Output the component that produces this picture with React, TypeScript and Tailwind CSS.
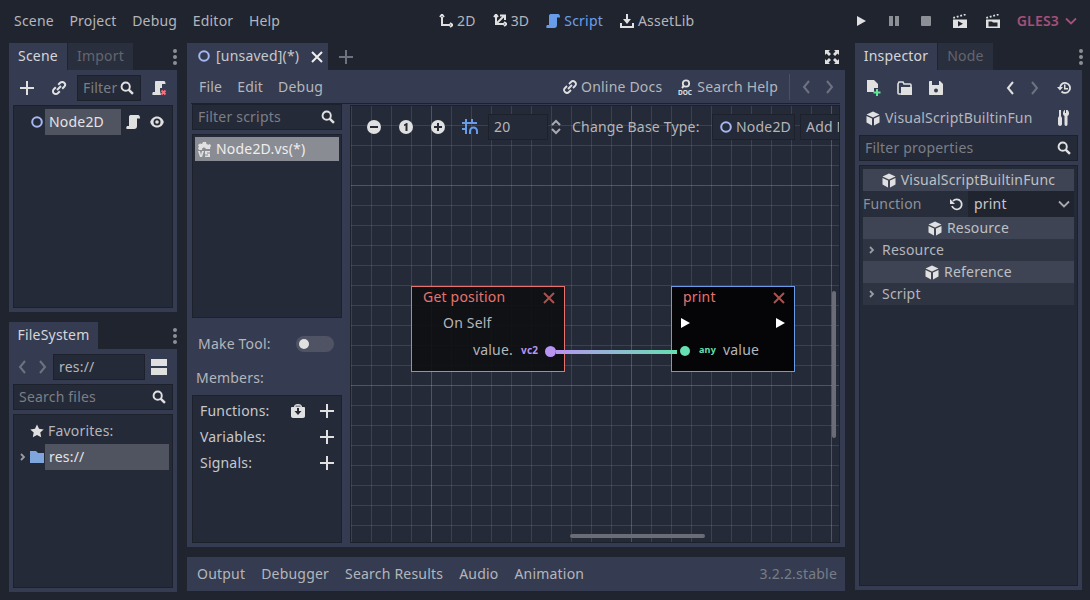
import type { ReactNode } from 'react';

const ink = '#e0e0e0';

function Plus({ className = '' }: { className?: string }) {
  return (
    <svg width="16" height="16" viewBox="0 0 16 16" className={className}>
      <path d="M7 1h2v6h6v2H9v6H7V9H1V7h6z" fill={ink} />
    </svg>
  );
}

function Search({ className = '' }: { className?: string }) {
  return (
    <svg width="14" height="14" viewBox="0 0 16 16" className={className}>
      <circle cx="6.500" cy="6.500" r="4.700" fill="none" stroke={ink} strokeWidth="2.200" />
      <path d="M9.800 9.800l5 5" stroke={ink} strokeWidth="2.800" />
    </svg>
  );
}

function Dots() {
  return (
    <svg width="6" height="16" viewBox="0 0 6 16">
      <circle cx="3" cy="2" r="2" fill="#8d8f96" />
      <circle cx="3" cy="8" r="2" fill="#8d8f96" />
      <circle cx="3" cy="14" r="2" fill="#8d8f96" />
    </svg>
  );
}

function NodeRing({ size = 12 }: { size?: number }) {
  return (
    <svg width={size} height={size} viewBox="0 0 12 12" className="shrink-0">
      <circle cx="6" cy="6" r="4.800" fill="none" stroke="#a5b7f3" strokeWidth="2" />
    </svg>
  );
}

function Cube({ fill = ink }: { fill?: string }) {
  return (
    <svg width="14" height="15" viewBox="0 0 14 15" className="shrink-0">
      <path d="M7 0.500l6.500 3L7 6.500 0.500 3.500z" fill={fill} />
      <path d="M0.500 5l5.500 2.600V14.500L0.500 11.500z" fill={fill} />
      <path d="M13.500 5L8 7.600v6.900l5.500-3z" fill={fill} />
    </svg>
  );
}

function Scroll({ fill = ink, width = 14 }: { fill?: string; width?: number }) {
  return (
    <svg width={width} height={width} viewBox="0 0 14 14" className="shrink-0">
      <path d="M4.500 0H12c1.500 0 2 1.500 2 3.500h-3V11c0 2-1 3-3 3H1c-1 0-1-2 0-3h2V2c0-1 .5-2 1.500-2z" fill={fill} />
    </svg>
  );
}

function Chevron({ dir, color = '#8b8f99' }: { dir: 'left' | 'right'; color?: string }) {
  return (
    <svg width="10" height="14" viewBox="0 0 10 14" className="block">
      <path d={dir === 'left' ? 'M8 1L3 7l5 6' : 'M2 1l5 6-5 6'} fill="none" stroke={color} strokeWidth="2" />
    </svg>
  );
}

function Caret() {
  return (
    <svg width="6" height="8" viewBox="0 0 6 8" className="shrink-0">
      <path d="M1 1l3 3-3 3" fill="none" stroke="#9a9da5" strokeWidth="1.800" />
    </svg>
  );
}

function Clapper({ variant }: { variant: 'play' | 'folder' }) {
  return (
    <svg width="14" height="14" viewBox="0 0 14 14" className="block">
      <path d="M0 3l1.800-.500.500 1.700-1.800.5zM3.500 2l1.800-.500.500 1.700-1.800.5zM7 1l1.800-.500.500 1.700-1.800.5zM10.500 0l1.800-.500.500 1.700-1.800.5z" fill={ink} />
      <path d="M0 5.500h14V14H0z" fill={ink} />
      {variant === 'play' ? <path d="M5 7l5 2.700-5 2.800z" fill="#20242f" /> : <path d="M2.500 7.500h3.500l1 1h4.500v4h-9z" fill="#20242f" />}
    </svg>
  );
}

function Tab({ active, children, w }: { active?: boolean; children: ReactNode; w: string }) {
  return (
    <div
      className={`flex h-[27px] items-center justify-center pb-[2px] ${w} ${
        active ? 'bg-[#353c51] text-[#d5d6d9]' : 'bg-[#2a2f3e] text-[#63666f]'
      }`}
    >
      {children}
    </div>
  );
}

function TopLink({ icon, label, color = 'text-[#b4b6bb]' }: { icon: ReactNode; label: string; color?: string }) {
  return (
    <div className={`flex items-center gap-[4px] ${color}`}>
      {icon}
      <span>{label}</span>
    </div>
  );
}

function Input({ className, text, muted = true }: { className: string; text: string; muted?: boolean }) {
  return (
    <div className={`flex h-[26px] items-center justify-between overflow-hidden border border-[#1d212b] bg-[#252a38] pl-[5px] pr-[6px] ${className}`}>
      <span className={muted ? 'text-[#7b7e86]' : 'text-[#b4b6bb]'}>{text}</span>
      <Search className="shrink-0" />
    </div>
  );
}

function SectionHead({ label }: { label: string }) {
  return (
    <div className="flex h-[22px] items-center justify-center gap-[5px] bg-[#3e4453] text-[#bfc0c4]">
      <Cube />
      <span>{label}</span>
    </div>
  );
}

function SectionRow({ label }: { label: string }) {
  return (
    <div className="flex h-[22px] items-center gap-[7px] bg-[#2e3442] pl-[6px] text-[#b4b6bb]">
      <Caret />
      <span>{label}</span>
    </div>
  );
}

function ScenePanel() {
  return (
    <div className="flex h-[269px] flex-col">
      <div className="flex items-center">
        <Tab active w="w-[58px]">Scene</Tab>
        <div className="w-px" />
        <Tab w="w-[65px]">Import</Tab>
        <div className="ml-auto mr-[-1px] flex">
          <Dots />
        </div>
      </div>
      <div className="flex min-h-0 flex-1 flex-col bg-[#353c51] px-[4px] pb-[4px] pt-[5px]">
        <div className="flex h-[26px] items-center">
          <Plus className="ml-[6px] shrink-0" />
          <svg width="16" height="16" viewBox="0 0 16 16" className="ml-[16px] shrink-0">
            <path d="M6 10l4-4M4.800 7.200L2.800 9.200a2.800 2.800 0 0 0 4 4l2-2M11.200 8.800l2-2a2.800 2.800 0 0 0-4-4l-2 2" fill="none" stroke={ink} strokeWidth="2" />
          </svg>
          <Input className="ml-[10px] w-[64px] shrink-0" text="Filter" />
          <svg width="16" height="16" viewBox="0 0 16 16" className="ml-[10px] shrink-0">
            <path d="M5 1h8c1 0 1.500 1 1.500 3H11v4H9v3l1 4H2c-1 0-1-2 0-3h2V2c0-.5.500-1 1-1z" fill={ink} />
            <path d="M10.500 10.500l4 4M14.500 10.500l-4 4" stroke="#ff6f7d" strokeWidth="1.800" />
          </svg>
        </div>
        <div className="mt-[4px] min-h-0 flex-1 border border-[#1d212b] bg-[#252a38] pl-[17px] pt-[3px]">
          <div className="flex h-[26px] items-center">
            <NodeRing />
            <div className="ml-[2px] flex h-[26px] w-[76px] items-center bg-[#505360] pl-[4px] text-[#e4e4e6]">Node2D</div>
            <div className="ml-[5px]"><Scroll /></div>
            <svg width="14" height="12" viewBox="0 0 14 12" className="ml-[10px]">
              <path d="M7 0.500c3.500 0 6 2.500 6.800 5.500-.8 3-3.300 5.500-6.800 5.500S1 9 .2 6C1 3 3.500.5 7 .5z" fill={ink} />
              <circle cx="7" cy="6" r="3.500" fill="#252a38" />
              <circle cx="7" cy="6" r="1.800" fill={ink} />
            </svg>
          </div>
        </div>
      </div>
    </div>
  );
}

function FileSystemPanel() {
  return (
    <div className="mt-[10px] flex h-[270px] flex-col">
      <div className="flex items-center">
        <Tab active w="w-[89px]">FileSystem</Tab>
        <div className="ml-auto mr-[-1px] flex">
          <Dots />
        </div>
      </div>
      <div className="flex min-h-0 flex-1 flex-col bg-[#353c51] px-[4px] pb-[4px] pt-[5px]">
        <div className="flex h-[26px] items-center">
          <div className="ml-[4px]"><Chevron dir="left" color="#6e7280" /></div>
          <div className="ml-[11px]"><Chevron dir="right" color="#6e7280" /></div>
          <div className="ml-[5px] flex h-[26px] w-[92px] items-center border border-[#1d212b] bg-[#252a38] pl-[5px] text-[#b4b6bb]">res://</div>
          <div className="ml-[6px] flex w-[16px] flex-col gap-[2px]">
            <div className="h-[7px] bg-[#e0e0e0]" />
            <div className="h-[7px] bg-[#e0e0e0]" />
          </div>
        </div>
        <Input className="mt-[4px]" text="Search files" />
        <div className="mt-[4px] min-h-0 flex-1 border border-[#1d212b] bg-[#252a38] pt-[3px]">
          <div className="flex h-[26px] items-center pl-[16px] text-[#b4b6bb]">
            <svg width="14" height="14" viewBox="0 0 14 14">
              <path d="M7 .5l2 4.300 4.700.6-3.400 3.200.9 4.700L7 11l-4.200 2.300.9-4.700L.3 5.400 5 4.800z" fill={ink} />
            </svg>
            <span className="ml-[4px]">Favorites:</span>
          </div>
          <div className="flex h-[26px] items-center">
            <div className="ml-[6px]"><Caret /></div>
            <svg width="14" height="12" viewBox="0 0 14 12" className="ml-[4px] shrink-0">
              <path d="M0 0h6l2 2h6v10H0z" fill="#7fa6dc" />
            </svg>
            <div className="ml-px flex h-[26px] w-[124px] items-center bg-[#505360] pl-[4px] text-[#e4e4e6]">res://</div>
          </div>
        </div>
      </div>
    </div>
  );
}

function MemberRow({ label, extra }: { label: string; extra?: boolean }) {
  return (
    <div className="flex h-[26px] items-center pl-[7px] pr-[6px] text-[#c7c8cb]">
      <span className="flex-1">{label}</span>
      {extra && (
        <svg width="14" height="14" viewBox="0 0 14 14" className="mr-[14px]">
          <path d="M3 3c0-2 1.500-3 4-3s4 1 4 3h2c.6 0 1 .5 1 1v8c0 1-.8 2-2 2H2c-1 0-2-1-2-2V4c0-.5.4-1 1-1z" fill={ink} />
          <path d="M6 4h2v3h2.500L7 11 3.500 7H6zM4.500 2.500h5v-.8h-5z" fill="#252a38" />
        </svg>
      )}
      <Plus />
    </div>
  );
}

function GraphNode({
  className,
  border,
  title,
  bg,
  children,
}: {
  className: string;
  border: string;
  title: string;
  bg: string;
  children: ReactNode;
}) {
  return (
    <div className={`absolute h-[86px] border ${border} ${bg} ${className}`}>
      <div className="flex h-[20px] items-center justify-between pl-[11px] pr-[9px] text-[#e8736d]">
        <span>{title}</span>
        <svg width="12" height="12" viewBox="0 0 12 12" className="mt-[2px]">
          <path d="M1 1l10 10M11 1L1 11" stroke="#a9534f" strokeWidth="2" />
        </svg>
      </div>
      {children}
    </div>
  );
}

function ExecArrow() {
  return (
    <svg width="9" height="10" viewBox="0 0 9 10">
      <path d="M0 0l9 5-9 5z" fill="#ffffff" />
    </svg>
  );
}

function Canvas() {
  return (
    <div className="relative min-w-0 flex-1 overflow-hidden border border-[#1d212b] bg-[#252a38] bg-[linear-gradient(to_right,rgba(255,255,255,0.1)_1px,transparent_1px),linear-gradient(to_bottom,rgba(255,255,255,0.1)_1px,transparent_1px),linear-gradient(to_right,rgba(255,255,255,0.11)_1px,transparent_1px),linear-gradient(to_bottom,rgba(255,255,255,0.11)_1px,transparent_1px)] [background-position:80px_0,0_79px,0_0,0_-1px] [background-size:200px_200px,200px_200px,20px_20px,20px_20px]">
      {/* graph toolbar */}
      <div className="absolute left-[16px] top-[8px] flex h-[26px] items-center">
        <svg width="14" height="14" viewBox="0 0 14 14" className="shrink-0">
          <circle cx="7" cy="7" r="7" fill={ink} />
          <path d="M3 6h8v2H3z" fill="#252a38" />
        </svg>
        <svg width="14" height="14" viewBox="0 0 14 14" className="ml-[18px] shrink-0">
          <circle cx="7" cy="7" r="7" fill={ink} />
          <path d="M5 4.500L7.500 3H8.500v8h-2V5.500L5 6z" fill="#252a38" />
        </svg>
        <svg width="14" height="14" viewBox="0 0 14 14" className="ml-[18px] shrink-0">
          <circle cx="7" cy="7" r="7" fill={ink} />
          <path d="M6 3h2v3h3v2H8v3H6V8H3V6h3z" fill="#252a38" />
        </svg>
        <svg width="16" height="16" viewBox="0 0 16 16" className="ml-[17px] shrink-0">
          <path d="M4 0v15M10 0v5M0 4h15M0 10h5" stroke="#699ce8" strokeWidth="2" fill="none" />
          <path d="M8 15v-3a3.500 3.500 0 0 1 7 0v3" stroke="#699ce8" strokeWidth="2" fill="none" />
        </svg>
        <div className="ml-[10px] flex h-[26px] w-[60px] shrink-0 items-center border border-[#1d212b] bg-[#252a38] pl-[5px] text-[#b4b6bb]">20</div>
        <svg width="12" height="16" viewBox="0 0 12 16" className="ml-[2px] shrink-0">
          <path d="M2 6l4-4 4 4M2 10l4 4 4-4" fill="none" stroke="#a8aab0" strokeWidth="2" />
        </svg>
        <span className="ml-[10px] w-[128px] shrink-0 whitespace-nowrap text-[#b4b6bb]">Change Base Type:</span>
        <div className="ml-[12px] flex h-[26px] w-[83px] shrink-0 items-center gap-[4px] border border-[#1d212b] bg-[#252a38] pl-[7px] text-[#b4b6bb]">
          <NodeRing />
          <span>Node2D</span>
        </div>
        <div className="ml-[5px] flex h-[26px] w-[80px] shrink-0 items-center whitespace-nowrap border border-[#1d212b] bg-[#252a38] pl-[5px] text-[#b4b6bb]">Add Node</div>
      </div>

      <GraphNode className="left-[60px] top-[180px] w-[154px]" border="border-[#e8736d]" title="Get position" bg="bg-[#0d0e12]/90">
        <div className="flex h-[31px] items-center pl-[31px] text-[#b4b6bb]">On Self</div>
        <div className="flex h-[24px] items-center justify-end pr-[51px] text-[#b4b6bb]">
          <span>value.</span>
        </div>
        <span className="absolute left-[109px] top-[56px] text-[10px] font-bold leading-[14px] text-[#b795f0]">vc2</span>
        <div className="absolute right-[8px] top-[59px] h-[11px] w-[11px] rounded-full bg-[#b795f0]" />
      </GraphNode>

      <GraphNode className="left-[320px] top-[180px] w-[124px]" border="border-[#699ce8]" title="print" bg="bg-[#050508]">
        <div className="flex h-[31px] items-center justify-between px-[9px]">
          <ExecArrow />
          <ExecArrow />
        </div>
        <div className="flex h-[24px] items-center text-[#b4b6bb]">
          <div className="ml-[8px] mt-[2px] h-[10px] w-[10px] rounded-full bg-[#66e0b0]" />
          <span className="ml-[9px] w-[19px] text-[9px] font-bold text-[#66e0b0]">any</span>
          <span className="ml-[5px]">value</span>
        </div>
      </GraphNode>

      {/* wire */}
      <div className="absolute left-[205px] top-[244px] h-[4px] w-[121px] bg-[linear-gradient(to_right,#b795f0,#66e0b0)]" />

      {/* scrollbars */}
      <div className="absolute left-[219px] top-[428px] h-[4px] w-[135px] rounded-full bg-[#6a6d77]" />
      <div className="absolute left-[481px] top-[185px] h-[147px] w-[4px] rounded-full bg-[#6a6d77]" />
    </div>
  );
}

function CenterPanel() {
  return (
    <div className="flex w-[658px] flex-col">
      <div className="flex items-center">
        <div className="flex h-[27px] w-[141px] items-center bg-[#353c51] pb-[2px] pl-[11px] text-[#c7c8cb]">
          <NodeRing />
          <span className="ml-[6px]">[unsaved](*)</span>
          <svg width="12" height="12" viewBox="0 0 12 12" className="ml-[12px] mt-[2px]">
            <path d="M1 1l10 10M11 1L1 11" stroke="#eeeeee" strokeWidth="2" />
          </svg>
        </div>
        <svg width="14" height="14" viewBox="0 0 14 14" className="ml-[11px]">
          <path d="M6 0h2v6h6v2H8v6H6V8H0V6h6z" fill="#6e7280" />
        </svg>
        <svg width="14" height="14" viewBox="0 0 14 14" className="ml-auto mr-[6px]">
          <path d="M0 0h5L3.500 1.500 6 4 4 6 1.500 3.500 0 5zM14 0v5l-1.500-1.500L10 6 8 4l2.500-2.500L9 0zM0 14V9l1.500 1.500L4 8l2 2-2.500 2.500L5 14zM14 14H9l1.500-1.500L8 10l2-2 2.500 2.500L14 9z" fill={ink} />
        </svg>
      </div>
      <div className="flex h-[477px] flex-col bg-[#353c51] pb-[4px] pl-[4px] pr-[5px]">
        <div className="flex h-[34px] shrink-0 items-center border-b border-[#1d212b] pl-[8px] pr-[5px] text-[#b4b6bb]">
          <span>File</span>
          <span className="ml-[15px]">Edit</span>
          <span className="ml-[15px]">Debug</span>
          <div className="ml-auto flex items-center gap-[15px]">
            <TopLink
              label="Online Docs"
              icon={
                <svg width="14" height="14" viewBox="0 0 14 14">
                  <path d="M5 9l4-4M4 6L2 8a2.700 2.700 0 0 0 4 4l2-2M10 8l2-2a2.700 2.700 0 0 0-4-4L6 4" fill="none" stroke={ink} strokeWidth="1.800" />
                </svg>
              }
            />
            <TopLink
              label="Search Help"
              icon={
                <svg width="16" height="16" viewBox="0 0 16 16">
                  <circle cx="9" cy="4.500" r="3.200" fill="none" stroke={ink} strokeWidth="1.800" />
                  <path d="M6.800 6.800L5 9" stroke={ink} strokeWidth="2" />
                  <text x="8" y="15.500" textAnchor="middle" fontSize="6.500" fontWeight="700" fill={ink} letterSpacing="0">DOC</text>
                </svg>
              }
            />
          </div>
          <div className="ml-[11px] h-[26px] w-px bg-[#4b5164]" />
          <div className="ml-[11px]"><Chevron dir="left" color="#6e7280" /></div>
          <div className="ml-[14px]"><Chevron dir="right" color="#6e7280" /></div>
        </div>
        <div className="flex min-h-0 flex-1 pt-[1px]">
          <div className="-mt-px flex w-[151px] shrink-0 flex-col pl-px">
            <Input className="!h-[26px]" text="Filter scripts" />
            <div className="mt-[4px] h-[184px] shrink-0 border border-[#1d212b] bg-[#252a38] px-[2px] pt-[2px]">
              <div className="flex h-[24px] items-center gap-[4px] bg-[#8a8c93] pl-[2px] text-[#eeeeee]">
                <svg width="15" height="15" viewBox="0 0 15 15" className="shrink-0">
                  <path d="M6 0h3l.5 2 1.800.8L13 2l1 2-1 1.500.3 1.500H9a2 2 0 0 0-4 1H2l-1-2 1-1-1-2 2-1.500L5 2z" fill={ink} />
                  <path d="M1 9h2l1 4 1-4h2l-2 6H3zM8 9h5v1.500h-3v1h3V15H8v-1.500h3v-1H8z" fill={ink} />
                </svg>
                <span>Node2D.vs(*)</span>
              </div>
            </div>
            <div className="mt-[13px] flex h-[26px] items-center justify-between pl-[6px] pr-[8px] text-[#b4b6bb]">
              <span>Make Tool:</span>
              <div className="flex h-[16px] w-[38px] items-center rounded-full bg-[#4f5364] pl-[3px]">
                <div className="h-[10px] w-[10px] rounded-full bg-[#e0e0e0]" />
              </div>
            </div>
            <div className="mt-[8px] flex h-[26px] items-center pl-[4px] text-[#b4b6bb]">Members:</div>
            <div className="mt-[4px] min-h-0 flex-1 border border-[#1d212b] bg-[#252a38] pt-[2px]">
              <MemberRow label="Functions:" extra />
              <MemberRow label="Variables:" />
              <MemberRow label="Signals:" />
            </div>
          </div>
          <div className="ml-[8px] flex min-w-0 flex-1">
            <Canvas />
          </div>
        </div>
      </div>
      <div className="mt-[10px] flex h-[34px] items-center bg-[#353c51] pl-[10px] pr-[8px] text-[#b4b6bb]">
        <span>Output</span>
        <span className="ml-[16px]">Debugger</span>
        <span className="ml-[16px]">Search Results</span>
        <span className="ml-[16px]">Audio</span>
        <span className="ml-[16px]">Animation</span>
        <span className="ml-auto text-[#797c86]">3.2.2.stable</span>
      </div>
    </div>
  );
}

function InspectorPanel() {
  return (
    <div className="flex w-[227px] flex-col">
      <div className="flex items-center">
        <Tab active w="w-[82px]">Inspector</Tab>
        <div className="w-px" />
        <Tab w="w-[55px]">Node</Tab>
        <div className="ml-auto mr-[-2px] flex">
          <Dots />
        </div>
      </div>
      <div className="flex h-[520px] flex-col bg-[#353c51] px-[4px] pb-[4px]">
        <div className="flex h-[35px] shrink-0 items-center pl-[7px] pr-[7px]">
          <svg width="15" height="16" viewBox="0 0 15 16">
            <path d="M1 0h7l4 4v4H8v4H1z" fill={ink} />
            <path d="M10 9h2v2.500h2.500v2H12V16h-2v-2.500H7.500v-2H10z" fill="#5fe89c" />
          </svg>
          <svg width="15" height="14" viewBox="0 0 15 14" className="ml-[16px]">
            <path d="M1 3l1-2h4l1 2h6c.6 0 1 .4 1 1v9H2c-.6 0-1-.4-1-1z" fill="none" stroke={ink} strokeWidth="1.600" />
            <path d="M4 6h11v8H4z" fill={ink} />
          </svg>
          <svg width="14" height="14" viewBox="0 0 14 14" className="ml-[17px]">
            <path d="M0 1c0-.6.4-1 1-1h10l3 3v10c0 .6-.4 1-1 1H1c-.6 0-1-.4-1-1z" fill={ink} />
            <path d="M3 0h7v4H3z" fill="#353c51" />
            <circle cx="7" cy="9.500" r="2" fill="#353c51" />
          </svg>
          <div className="ml-auto"><Chevron dir="left" color="#e0e0e0" /></div>
          <div className="ml-[15px]"><Chevron dir="right" color="#6e7280" /></div>
          <svg width="14" height="14" viewBox="0 0 14 14" className="ml-[17px]">
            <path d="M3 7a5 5 0 1 1 1.500 3.500" fill="none" stroke={ink} strokeWidth="1.800" />
            <path d="M0 6h6L3 9.500zM7 3.500h1.500V7H11v1.500H7z" fill={ink} />
          </svg>
        </div>
        <div className="flex h-[26px] shrink-0 items-center pl-[7px] pr-[8px] text-[#b4b6bb]">
          <Cube />
          <span className="ml-[5px] flex-1 whitespace-nowrap">VisualScriptBuiltinFun</span>
          <svg width="14" height="16" viewBox="0 0 14 16">
            <path d="M3 0h2v6l1 2v6c0 1-1 2-2 2s-2-1-2-2V8l1-2zM9 0v3h1V0h1.500c1 1 1.500 2 1.500 3.500 0 1-.5 2-1.500 2.500v8c0 1-.5 2-1.500 2s-1.500-1-1.500-2V6C7.500 5.500 7 4.500 7 3.500 7 2 7.500 1 8.500 0z" fill={ink} />
          </svg>
        </div>
        <Input className="mt-[4px] shrink-0" text="Filter properties" />
        <div className="mt-[4px] min-h-0 flex-1 border border-[#1d212b] bg-[#252a38] px-[3px] pt-[3px]">
          <SectionHead label="VisualScriptBuiltinFunc" />
          <div className="flex h-[26px] items-center bg-[#272d3b] text-[#8f9198]">
            <span className="w-[87px]">Function</span>
            <svg width="14" height="14" viewBox="0 0 14 14" className="mr-[4px] shrink-0">
              <path d="M3 4a5 5 0 1 1-1 5" fill="none" stroke={ink} strokeWidth="1.800" />
              <path d="M0 2v5h5z" fill={ink} />
            </svg>
            <div className="flex h-[26px] flex-1 items-center justify-between bg-[#20242f] pl-[6px] pr-[4px] text-[#c7c8cb]">
              <span>print</span>
              <svg width="12" height="8" viewBox="0 0 12 8">
                <path d="M1 1.500l5 5 5-5" fill="none" stroke="#a8aab0" strokeWidth="1.800" />
              </svg>
            </div>
          </div>
          <SectionHead label="Resource" />
          <SectionRow label="Resource" />
          <SectionHead label="Reference" />
          <SectionRow label="Script" />
        </div>
      </div>
    </div>
  );
}

export default function App() {
  return (
    <div className="h-[600px] w-[1090px] overflow-hidden bg-[#20242f] font-['Noto_Sans',sans-serif] text-[14px] leading-[20px] tracking-[0.2px]">
      {/* top bar */}
      <div className="relative flex h-[43px] items-center pb-[2px] pl-[14px] pr-[13px] text-[#b4b6bb]">
        <div className="flex gap-[15.6px]">
          <span>Scene</span>
          <span>Project</span>
          <span>Debug</span>
          <span>Editor</span>
          <span>Help</span>
        </div>
        <div className="absolute left-[439px] top-[11px] flex gap-[17px]">
          <TopLink
            label="2D"
            icon={
              <svg width="14" height="14" viewBox="0 0 14 14">
                <path d="M3 3v8h8M1 3l2-2.500L5 3M11 9l2.500 2-2.500 2" fill="none" stroke={ink} strokeWidth="2" />
              </svg>
            }
          />
          <TopLink
            label="3D"
            icon={
              <svg width="14" height="14" viewBox="0 0 14 14">
                <path d="M3 2v8h8M3 10l8-8M1 3l2-2.500L5 3M11 8l2.500 2-2.500 2M7 1.500h5V6" fill="none" stroke={ink} strokeWidth="2" />
              </svg>
            }
          />
          <TopLink label="Script" color="text-[#6d9fe8]" icon={<Scroll fill="#699ce8" />} />
          <TopLink
            label="AssetLib"
            icon={
              <svg width="14" height="14" viewBox="0 0 14 14">
                <path d="M6 0h2v5h3L7 10 3 5h3zM0 9h2v3h10V9h2v5H0z" fill={ink} />
              </svg>
            }
          />
        </div>
        <div className="ml-auto flex items-center">
          <svg width="12" height="12" viewBox="0 0 12 12">
            <path d="M1 1l9 5-9 5z" fill={ink} />
          </svg>
          <svg width="12" height="12" viewBox="0 0 12 12" className="ml-[20px]">
            <path d="M1 1h4v10H1zM7 1h4v10H7z" fill="#8d8f96" />
          </svg>
          <svg width="12" height="12" viewBox="0 0 12 12" className="ml-[20px]">
            <rect x="1" y="1" width="10" height="10" rx="1" fill="#8d8f96" />
          </svg>
          <div className="ml-[21px]"><Clapper variant="play" /></div>
          <div className="ml-[19px]"><Clapper variant="folder" /></div>
          <span className="ml-[17px] font-semibold text-[#a55078]">GLES3</span>
          <svg width="12" height="8" viewBox="0 0 12 8" className="ml-[6px]">
            <path d="M1 1.500l5 5 5-5" fill="none" stroke="#a55078" strokeWidth="1.800" />
          </svg>
        </div>
      </div>

      <div className="flex pl-[9px]">
        <div className="flex w-[168px] flex-col">
          <ScenePanel />
          <FileSystemPanel />
        </div>
        <div className="ml-[10px]">
          <CenterPanel />
        </div>
        <div className="ml-[10px]">
          <InspectorPanel />
        </div>
      </div>
    </div>
  );
}
